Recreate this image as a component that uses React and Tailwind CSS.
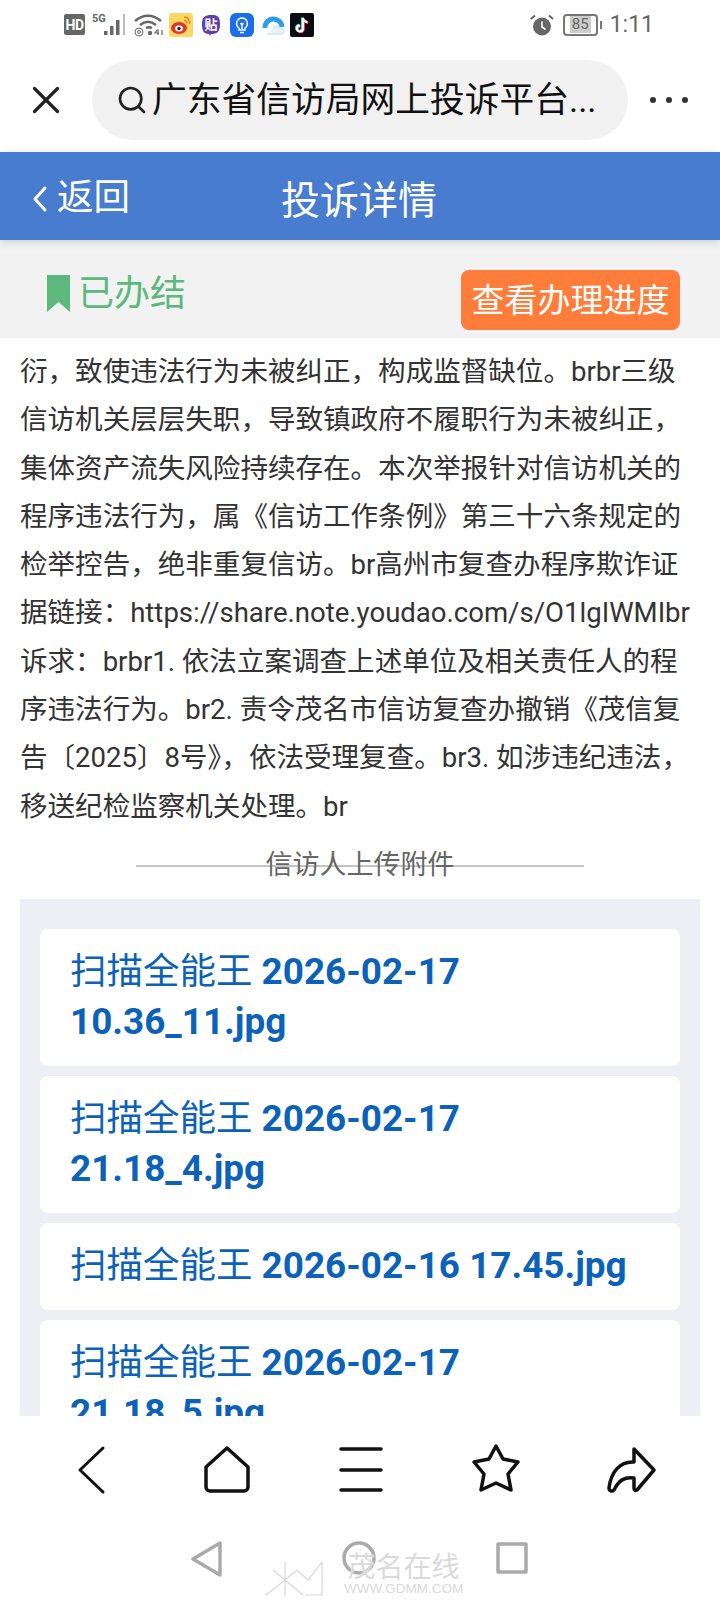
import { X, Search } from 'lucide-react';

const cjk = "font-['Roboto','Noto_Sans_CJK_SC',sans-serif]";

const bodyLines = [
  '衍，致使违法行为未被纠正，构成监督缺位。brbr三级',
  '信访机关层层失职，导致镇政府不履职行为未被纠正，',
  '集体资产流失风险持续存在。本次举报针对信访机关的',
  '程序违法行为，属《信访工作条例》第三十六条规定的',
  '检举控告，绝非重复信访。br高州市复查办程序欺诈证',
  '据链接：https://share.note.youdao.com/s/O1lgIWMIbr',
  '诉求：brbr1. 依法立案调查上述单位及相关责任人的程',
  '序违法行为。br2. 责令茂名市信访复查办撤销《茂信复',
  '告〔2025〕8号》，依法受理复查。br3. 如涉违纪违法，',
  '移送纪检监察机关处理。br',
];

const files = [
  ['2026-02-17', '10.36_11.jpg'],
  ['2026-02-17', '21.18_4.jpg'],
  ['2026-02-16 17.45.jpg'],
  ['2026-02-17', '21.18_5.jpg'],
];

function StatusBar() {
  return (
    <div className="flex h-[49px] items-center justify-between pl-[64px] pr-[66px] text-[#666]">
      <div className="flex items-center">
        <div className="flex h-[21px] w-[21px] items-center justify-center rounded-[2px] bg-[#666] text-[14px] font-bold leading-none tracking-[-0.5px] text-white">HD</div>
        <svg width="36" height="26" viewBox="0 0 36 26" className="ml-[7px]" fill="#666">
          <text x="0" y="10" fontSize="11" fontWeight="700" fontFamily="Roboto">5G</text>
          <rect x="12" y="19" width="3.500" height="4" />
          <rect x="18" y="14" width="3.500" height="9" />
          <rect x="24" y="8" width="3.500" height="15" />
          <rect x="31" y="2" width="2" height="21" fill="#bbb" />
        </svg>
        <svg width="32" height="24" viewBox="0 0 32 24" className="ml-[5px]" fill="none" stroke="#666" strokeWidth="2.500">
          <path d="M2 8c8-7 18-7 26 0" />
          <path d="M7 12c5-4 11-4 16 0" />
          <path d="M13 15c2-1 4-1 6 0" />
          <circle cx="6" cy="19" r="4" strokeWidth="1" />
          <circle cx="6" cy="19" r="1.500" strokeWidth="1" />
          <circle cx="17" cy="20" r="2.200" fill="#666" stroke="none" />
          <path d="M24 17l-2 3h4M25 16v6M29 17v5" strokeWidth="1.200" />
        </svg>
        <svg width="24" height="24" viewBox="0 0 24 24" className="ml-[4px]">
          <rect width="24" height="24" rx="3" fill="#fbd862" />
          <ellipse cx="10" cy="15" rx="8" ry="6" fill="#e5352b" />
          <ellipse cx="10" cy="15.500" rx="4" ry="3" fill="#fff" />
          <circle cx="10" cy="15.500" r="1.700" fill="#222" />
          <path d="M15 4c4 0 6 3 5.500 7M15 7.500c2 0 3 1 3 3" fill="none" stroke="#e8862a" strokeWidth="1.500" />
        </svg>
        <svg width="20" height="24" viewBox="0 0 20 24" className="ml-[8px]">
          <path d="M10 2c6 0 9 1 9 9s-3 10-9 10l-1 2-1-2C3 21 1 18 1 11S4 2 10 2z" fill="#5b3fb0" />
          <text x="10" y="16" textAnchor="middle" fontSize="13" fontWeight="700" fill="#fff" fontFamily="Noto Sans CJK SC">贴</text>
        </svg>
        <svg width="24" height="24" viewBox="0 0 24 24" className="ml-[9px]">
          <rect width="24" height="24" rx="6" fill="#1a6fe8" />
          <path d="M12 5a5.500 5.500 0 0 0-3 10v2h6v-2a5.500 5.500 0 0 0-3-10zM10 19.500h4M10.500 10l1.500 2 1.500-2M12 12v4" fill="none" stroke="#fff" strokeWidth="1.400" />
        </svg>
        <svg width="24" height="24" viewBox="0 0 24 24" className="ml-[7px]" fill="none">
          <path d="M4 15a8.500 8.500 0 0 1 17-1" stroke="#2b9cf0" strokeWidth="5" />
          <path d="M6 21h14a3 3 0 0 0-1-6c-2-3-6-2-7 1" fill="#e9f3fa" stroke="#cfe6f7" strokeWidth="1.500" />
        </svg>
        <svg width="24" height="24" viewBox="0 0 24 24" className="ml-[5px]">
          <rect width="24" height="24" rx="2" fill="#0b0b14" />
          <path d="M13 5v10.500a3 3 0 1 1-3-3M13 5c.4 2.500 2 4 4.500 4.300" fill="none" stroke="#25f4ee" strokeWidth="2.400" transform="translate(-0.800 -0.600)" />
          <path d="M13 5v10.500a3 3 0 1 1-3-3M13 5c.4 2.500 2 4 4.500 4.300" fill="none" stroke="#fe2c55" strokeWidth="2.400" transform="translate(0.800 0.600)" />
          <path d="M13 5v10.500a3 3 0 1 1-3-3M13 5c.4 2.500 2 4 4.500 4.300" fill="none" stroke="#fff" strokeWidth="2" />
        </svg>
      </div>
      <div className="flex items-center">
        <svg width="26" height="24" viewBox="0 0 26 24" fill="#666">
          <circle cx="13" cy="13.500" r="9" />
          <path d="M13 8.500v5.500l3.500 2.500" fill="none" stroke="#fff" strokeWidth="1.600" />
          <path d="M2 6l4-3.500M24 6l-4-3.500" stroke="#666" strokeWidth="2" />
        </svg>
        <div className="ml-[8px] flex h-[22px] w-[35px] items-center justify-center rounded-[4px] border-2 border-[#777] text-[15px] leading-none">
          <span className="bg-[#ccc] px-[2px] py-[1px]">85</span>
        </div>
        <div className="ml-[2px] h-[8px] w-[2px] bg-[#777]" />
        <div className={`${cjk} ml-[8px] text-[23px] leading-none`}>1:11</div>
      </div>
    </div>
  );
}

function BrowserBar() {
  return (
    <div className="flex h-[103px] items-start pt-[11px]">
      <div className="flex h-[80px] w-[92px] items-center justify-center">
        <X size={46} strokeWidth={1.700} className="text-[#222]" />
      </div>
      <div className="flex h-[80px] w-[536px] items-center rounded-full bg-[#f1f1f1] pl-[24px]">
        <Search size={32} strokeWidth={2} className="shrink-0 text-[#222]" />
        <span className={`${cjk} ml-[4px] text-[34.750px] leading-none whitespace-nowrap text-[#111]`}>广东省信访局网上投诉平台...</span>
      </div>
      <div className="flex h-[80px] flex-1 items-center justify-center gap-[10px] pr-[10px]">
        <div className="h-[6px] w-[6px] rounded-full bg-[#333]" />
        <div className="h-[6px] w-[6px] rounded-full bg-[#333]" />
        <div className="h-[6px] w-[6px] rounded-full bg-[#333]" />
      </div>
    </div>
  );
}

function Header() {
  return (
    <div className="relative z-10 flex h-[88px] items-center bg-[#477cce] pl-[32px] text-white shadow-[0_2px_8px_rgba(0,0,0,0.15)]">
      <svg width="16" height="28" viewBox="0 0 16 28" fill="none" stroke="#fff" strokeWidth="3" strokeLinecap="round" strokeLinejoin="round" className="mt-[6px] shrink-0">
        <path d="M13 3L3 14l10 11" />
      </svg>
      <span className={`${cjk} ml-[9px] mt-[4px] text-[36.500px] leading-none`}>返回</span>
      <span className={`${cjk} ml-[151px] mt-[10px] text-[39px] leading-none`}>投诉详情</span>
    </div>
  );
}

function StatusRow() {
  return (
    <div className="flex h-[98px] items-start justify-between bg-[#f2f2f2] pl-[47px] pr-[40px] pt-[30px]">
      <div className="flex items-start pt-[5px]">
        <svg width="23" height="37" viewBox="0 0 23 37" fill="#5cb87c">
          <path d="M0 0h23v37l-11.500-10L0 37z" />
        </svg>
        <span className={`${cjk} ml-[8px] mt-[1px] text-[36px] leading-none text-[#5cb87c]`}>已办结</span>
      </div>
      <div className={`${cjk} flex h-[60px] w-[219px] items-center justify-center rounded-[8px] bg-[#ff7d3b] text-[33px] leading-none whitespace-nowrap text-white`}>
        查看办理进度
      </div>
    </div>
  );
}

function FileCard({ lines }) {
  return (
    <div className="rounded-[8px] bg-white px-[30px] pt-[18px] pb-[19px]">
      <div className="text-[36.900px] leading-[50px] font-bold whitespace-nowrap text-[#0b62b8]">
        <span className="text-[36.500px] font-normal">扫描全能王 </span>
        {lines[0]}
      </div>
      {lines[1] && <div className="text-[36.900px] leading-[50px] font-bold text-[#0b62b8]">{lines[1]}</div>}
    </div>
  );
}

function BottomNav() {
  return (
    <div className="flex h-[100px] items-start justify-between bg-white pl-[65px] pr-[63px] pt-[24px]">
      <svg width="54" height="64" viewBox="0 0 54 64" fill="none" stroke="#111" strokeWidth="3" strokeLinecap="round" strokeLinejoin="round">
        <path d="M38 8L15 30l23 22" />
      </svg>
      <svg width="54" height="64" viewBox="0 0 54 64" fill="none" stroke="#111" strokeWidth="3.500" strokeLinejoin="round">
        <path d="M27 8L6 27v20a4 4 0 0 0 4 4h34a4 4 0 0 0 4-4V27z" />
      </svg>
      <svg width="54" height="64" viewBox="0 0 54 64" fill="none" stroke="#111" strokeWidth="3.500" strokeLinecap="round">
        <path d="M7 9h40M7 30h40M7 50h40" />
      </svg>
      <svg width="54" height="64" viewBox="0 0 54 64" fill="none" stroke="#111" strokeWidth="3.500" strokeLinejoin="round">
        <path d="M27 6l7 13 15 3-10 12 3 16-15-7-15 7 3-16L5 22l15-3z" />
      </svg>
      <svg width="54" height="64" viewBox="0 0 54 64" fill="none" stroke="#111" strokeWidth="3.500" strokeLinejoin="round">
        <path d="M31 9l20 21-17 20c-2 1-3 0-3-2V38c-10-1-15 2-20 12-2 2-5 1-5-2 2-16 11-27 25-26V11c0-2 0-2 0-2z" />
      </svg>
    </div>
  );
}

function SystemNav() {
  return (
    <div className="relative flex flex-1 items-start justify-center gap-[120px] bg-white pt-[25px] pr-[3px]">
      <svg width="32" height="36" viewBox="0 0 32 36" fill="none" stroke="#aaa" strokeWidth="3.500" strokeLinejoin="round">
        <path d="M30 2v32L3 18z" />
      </svg>
      <svg width="34" height="36" viewBox="0 0 34 36" fill="none" stroke="#aaa" strokeWidth="3.500">
        <circle cx="17" cy="17" r="15" />
      </svg>
      <svg width="32" height="36" viewBox="0 0 32 36" fill="none" stroke="#aaa" strokeWidth="3.500" strokeLinejoin="round">
        <rect x="2" y="3" width="28" height="28" />
      </svg>
      {/* watermark */}
      <div className="absolute bottom-[4px] left-[265px] flex items-end">
        <svg width="64" height="36" viewBox="0 0 64 36" fill="none" stroke="#d8d8d8" strokeWidth="1.200">
          <path d="M20 2v34M8 10l12 10 12-10M1 35l19-15M20 20l18 15M32 10l11 10 14-18M57 2v34M40 35h17" />
        </svg>
        <div className="ml-[15px] flex flex-col items-center leading-none text-[#dadada] [text-shadow:0_0_2px_#fff]">
          <span className={`${cjk} text-[28px] leading-[28px]`}>茂名在线</span>
          <span className="font-['Liberation_Sans',sans-serif] text-[13.500px] leading-[14px] whitespace-nowrap">WWW.GDMM.COM</span>
        </div>
      </div>
    </div>
  );
}

export default function App() {
  return (
    <div className={`${cjk} flex h-[1600px] w-[720px] flex-col overflow-hidden bg-white`}>
      <StatusBar />
      <BrowserBar />
      <Header />
      <StatusRow />
      <div className="h-[1078px] shrink-0 overflow-hidden px-[20px] pt-[10px]">
        <div className="text-[27.560px] leading-[48.300px] whitespace-nowrap text-[#333]">
          {bodyLines.map((line) => (
            <div key={line}>{line}</div>
          ))}
        </div>
        <div className="relative mx-[116px] mt-[-5px] flex h-[80px] items-center justify-center">
          <div className="h-[1.500px] w-full bg-[#c4c4c4]" />
          <span className="absolute text-[27px] leading-none whitespace-nowrap text-[#666]">信访人上传附件</span>
        </div>
        <div className="mt-[-7px] flex flex-col gap-[10px] bg-[#eeeff4] px-[20px] pt-[30px]">
          {files.map((lines, i) => (
            <FileCard key={i} lines={lines} />
          ))}
        </div>
      </div>
      <BottomNav />
      <SystemNav />
    </div>
  );
}
